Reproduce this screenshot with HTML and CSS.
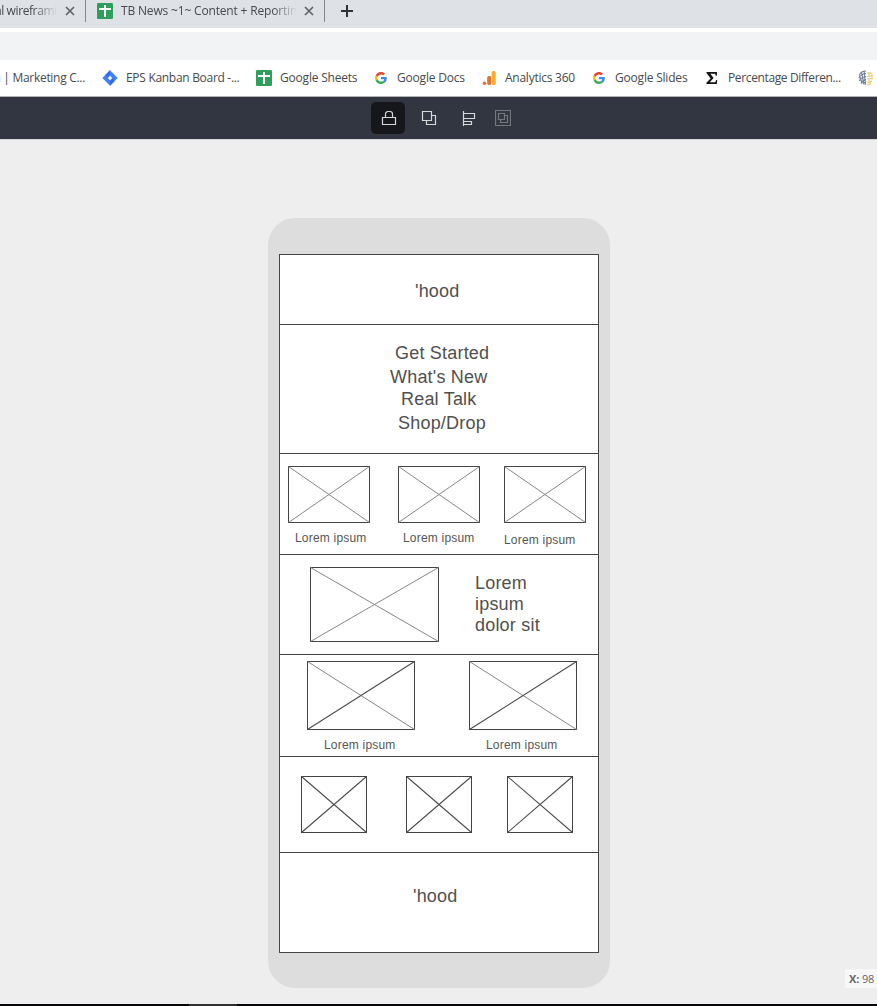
FILE: index.html
```
<!DOCTYPE html>
<html lang="en">
<head>
<meta charset="utf-8">
<title>Wireframe editor</title>
<link rel="stylesheet" href="styles.css">
</head>
<body>
<svg class="defs" width="0" height="0" aria-hidden="true">
  <symbol id="close" viewBox="0 0 10 10"><path d="M1 1l8 8M9 1L1 9" fill="none" stroke="#5f6368" stroke-width="1.7"/></symbol>
  <symbol id="sheets" viewBox="0 0 16 16"><rect width="16" height="16" rx="1.3" fill="#2e9e5b"/><path d="M7 2h2v3h5v2H9v7H7V7H2V5h5z" fill="#fff"/></symbol>
  <symbol id="google" viewBox="0 0 48 48"><path fill="#4285F4" d="M46.98 24.55c0-1.57-.15-3.09-.38-4.55H24v9.02h12.94c-.58 2.96-2.26 5.48-4.78 7.18l7.73 6c4.51-4.18 7.09-10.36 7.09-17.65z"/><path fill="#FBBC05" d="M10.53 28.59A14.5 14.5 0 0 1 9.77 24c0-1.6.27-3.14.76-4.59l-7.98-6.19A23.9 23.9 0 0 0 0 24c0 3.88.92 7.54 2.56 10.78z"/><path fill="#EA4335" d="M24 9.5c3.54 0 6.71 1.22 9.21 3.6l6.85-6.85C35.9 2.38 30.47 0 24 0 14.62 0 6.51 5.38 2.56 13.22l7.98 6.19C12.43 13.72 17.74 9.5 24 9.5z"/><path fill="#34A853" d="M24 48c6.48 0 11.93-2.13 15.89-5.81l-7.73-6c-2.15 1.45-4.92 2.3-8.16 2.3-6.26 0-11.57-4.22-13.47-9.91l-7.98 6.19C6.51 42.62 14.62 48 24 48z"/></symbol>
</svg>

<header class="browser">
  <div class="tabs">
    <div class="tab tab-first"><span class="tab-title">al wireframi</span><svg class="close"><use href="#close"/></svg></div>
    <div class="tab tab-news"><svg class="icon"><use href="#sheets"/></svg><span class="tab-title">TB News ~1~ Content + Reportin</span><svg class="close"><use href="#close"/></svg></div>
    <svg class="plus" viewBox="0 0 12 12"><path d="M6 0v12M0 6h12" stroke="#303236" stroke-width="2"/></svg>
  </div>
  <div class="address"></div>
  <nav class="bookmarks">
    <a class="mark mark-cut"><span><i class="violet">n</i> | Marketing C...</span></a>
    <a class="mark w-eps"><svg class="icon" viewBox="0 0 16 16"><path d="M8 .3L15.7 8 8 15.7.3 8z" fill="#3f80fb"/><path d="M8 .3v5L5.5 8 3.5 4.8zM8 15.7v-5L10.5 8l2 3.2z" fill="#2f6ee8"/><path d="M8 5.8L10.2 8 8 10.2 5.8 8z" fill="#fff"/></svg><span>EPS Kanban Board -...</span></a>
    <a class="mark w-sheets"><svg class="icon"><use href="#sheets"/></svg><span>Google Sheets</span></a>
    <a class="mark w-docs"><svg class="icon small"><use href="#google"/></svg><span>Google Docs</span></a>
    <a class="mark w-analytics"><svg class="icon" viewBox="0 0 16 16"><rect x="10.700" y="1" width="4" height="14" rx="1.6" fill="#f9ab2d"/><rect x="6.200" y="6" width="4" height="9" rx="1.6" fill="#e37430"/><circle cx="3.500" cy="13.3" r="1.8" fill="#e37430"/></svg><span>Analytics 360</span></a>
    <a class="mark w-slides"><svg class="icon small"><use href="#google"/></svg><span>Google Slides</span></a>
    <a class="mark w-percent"><svg class="icon" viewBox="0 0 16 16"><path d="M2.5 2h10.4v3.7h-1L11 3.8H6.4L9.6 8l-3.8 4.3h5.4l1-2.2h1L12.8 14H2.4v-1.2L6.6 8.4 2.5 3z" fill="#151515"/></svg><span>Percentage Differen...</span></a>
    <a class="mark"><svg class="icon globe" viewBox="0 0 16 16"><g fill="none" stroke-width="1.2"><path d="M8 1Q3 1 1.300 5M8 3.500Q3 4 .8 8M8 6.500Q4 7 1.200 11M8 9.500Q5 10 3 13.500M8 12.500H5M3.500 2.500l2.500 12M6.200 1.200l1.300 13.500M1.300 5.500l3 8" stroke="#71809b"/><path d="M9 3q3-1 5 1M9 6q3 1 6-1M9 9q3-1 6 0M9 12q3 1 5-1M9 15q2 0 4-2M11 3v3M14 5v4M11 9v3" stroke="#efce76"/></g></svg></a>
  </nav>
</header>

<div class="toolbar">
  <button class="tool active"><svg viewBox="0 0 16 16"><path d="M1.500 7.500h13v7h-13zM4.500 7.500V4a2.500 2.500 0 0 1 2.500-2.500h2a2.500 2.500 0 0 1 2.500 2.500v3.500"/></svg></button>
  <button class="tool"><svg viewBox="0 0 16 16"><path d="M1.500 1.500h9v9h-9zM11 5.500h3.500v9h-9V11"/></svg></button>
  <button class="tool"><svg viewBox="0 0 16 16"><path d="M2.500 1v15M3 3.500h10.500v5H3M3 11.500h7.500v3H3"/></svg></button>
  <button class="tool dim"><svg viewBox="0 0 16 16"><path d="M.5.5h15v15H.5zM3.500 3.500h6v6h-6zM10 5.500h2.500v7h-7V10"/></svg></button>
</div>

<main class="canvas">
  <div class="phone">
    <div class="screen">
      <section class="row brand"><p class="label">'hood</p></section>
      <section class="row menu">
        <p class="label get">Get Started</p><p class="label whats">What's New</p><p class="label talk">Real Talk</p><p class="label shop">Shop/Drop</p>
      </section>
      <section class="row thumbs">
        <figure><svg class="box" width="82" height="57"><rect x=".5" y=".5" width="81" height="56"/><path class="light" d="M.5.5l81 56M.5 56.500l81-56"/></svg><figcaption>Lorem ipsum</figcaption></figure>
        <figure><svg class="box" width="82" height="57"><rect x=".5" y=".5" width="81" height="56"/><path class="light" d="M.5.5l81 56M.5 56.500l81-56"/></svg><figcaption>Lorem ipsum</figcaption></figure>
        <figure><svg class="box" width="82" height="57"><rect x=".5" y=".5" width="81" height="56"/><path class="light" d="M.5.5l81 56M.5 56.500l81-56"/></svg><figcaption>Lorem ipsum</figcaption></figure>
      </section>
      <section class="row feature">
        <svg class="box" width="129" height="75"><rect x=".5" y=".5" width="128" height="74"/><path class="light" d="M.5.5l128 74M.5 74.500l128-74"/></svg>
        <p class="label">Lorem<br>ipsum<br>dolor sit</p>
      </section>
      <section class="row pair">
        <figure><svg class="box" width="108" height="69"><rect x=".5" y=".5" width="107" height="68"/><path class="light" d="M.5.5l107 68"/><path class="strong" d="M.5 68.500l107-68"/></svg><figcaption>Lorem ipsum</figcaption></figure>
        <figure><svg class="box" width="108" height="69"><rect x=".5" y=".5" width="107" height="68"/><path class="light" d="M.5.5l107 68"/><path class="strong" d="M.5 68.500l107-68"/></svg><figcaption>Lorem ipsum</figcaption></figure>
      </section>
      <section class="row tiles">
        <svg class="box" width="66" height="57"><rect x=".5" y=".5" width="65" height="56"/><path class="strong" d="M.5.5l65 56M.5 56.500l65-56"/></svg>
        <svg class="box" width="66" height="57"><rect x=".5" y=".5" width="65" height="56"/><path class="strong" d="M.5.5l65 56M.5 56.500l65-56"/></svg>
        <svg class="box" width="66" height="57"><rect x=".5" y=".5" width="65" height="56"/><path class="strong" d="M.5.5l65 56M.5 56.500l65-56"/></svg>
      </section>
      <section class="row footer"><p class="label">'hood</p></section>
    </div>
  </div>
  <div class="coords"><b>X:</b> 98</div>
</main>
<div class="taskbar"><div class="task"></div></div>
</body>
</html>
```
FILE: styles.css
```
* { box-sizing: border-box; }
body {
  margin: 0;
  height: 1006px;
  display: flex;
  flex-direction: column;
  overflow: hidden;
  background: #eee;
  font: 12px/16px "Open Sans", "Noto Sans", sans-serif;
  color: #46494d;
}
.defs { position: absolute; }
svg { display: block; flex: none; }
p, figure { margin: 0; }

/* Browser chrome */
.browser { height: 97px; background: #fff; border-bottom: 1px solid #b4b4b6; flex: none; }
.tabs { height: 28px; display: flex; background: #dee1e6; }
.tab { display: flex; align-items: center; height: 22px; border-right: 1px solid #85888c; white-space: nowrap; }
.tab-first { width: 86px; }
.tab-news { width: 239px; padding-left: 11px; }
.tab-title { letter-spacing: -.17px; -webkit-mask-image: linear-gradient(to right, #000 calc(100% - 24px), transparent); mask-image: linear-gradient(to right, #000 calc(100% - 24px), transparent); }
.tab-first .tab-title { width: 62px; margin-left: -5px; letter-spacing: -.4px; }
.tab-news .tab-title { width: 176px; margin-left: 8px; }
.close { width: 10px; height: 10px; }
.tab-first .close { margin-left: 8px; }
.tab-news .close { margin-left: 7px; }
.plus { width: 12px; height: 12px; margin: 5px 0 0 16px; }
.icon { width: 16px; height: 16px; }
.icon.small { padding: 2px; }
.address { height: 28px; margin-top: 4px; background: #f1f3f4; }
.bookmarks { display: flex; height: 36px; }
.mark { display: flex; align-items: center; gap: 8px; flex: none; white-space: nowrap; letter-spacing: -.2px; }
.mark-cut { width: 102px; padding-right: 17px; justify-content: flex-end; letter-spacing: -.3px; }
.violet { font-style: normal; color: #6554a8; }
.w-eps { width: 154px; letter-spacing: -.3px; }
.w-sheets { width: 117px; }
.w-docs { width: 108px; }
.w-analytics { width: 110px; letter-spacing: -.25px; }
.w-slides { width: 113px; }
.w-percent { width: 154px; letter-spacing: -.37px; }

/* Editor toolbar */
.toolbar { height: 42px; flex: none; display: flex; align-items: center; gap: 3px; padding-left: 371px; background: #323640; }
.tool { width: 34px; height: 32px; padding: 0; border: 0; border-radius: 5px; background: none; display: grid; place-items: center; }
.tool + .tool { width: 37px; padding-left: 5px; }
.tool svg { width: 16px; height: 16px; fill: none; stroke: #d6d7d9; stroke-width: 1.2; }
.tool.active { background: #15171a; padding-left: 2px; }
.tool + .tool.dim { width: 28px; padding-left: 2px; }
.tool.dim svg { stroke: #74777d; }

/* Canvas and device */
.canvas { position: relative; flex: 1; padding-top: 78px; border-top: 1px solid #d5d5d7; }
.phone { width: 342px; height: 770px; margin-left: 268px; padding: 36px 11px; border-radius: 27px; background: #ddd; }
.screen { width: 320px; height: 699px; border: 1px solid #444; background: #fff; }
.row { border-bottom: 1px solid #444; }
.row:last-child { border-bottom: 0; }
.label { font: 18px/21px "Liberation Sans", Arial, sans-serif; letter-spacing: .2px; color: #505050; white-space: nowrap; }
.brand { height: 70px; padding: 26px 0 0 135px; }
.menu { height: 129px; padding-top: 18px; }
.get { margin-left: 115px; }
.whats { margin: 3px 0 0 110px; }
.talk { margin: 1px 0 0 121px; }
.shop { margin: 3px 0 0 118px; }
.box { fill: none; stroke: #444; stroke-width: 1; }
.light { stroke: #858585; }
.strong { stroke: #4a4a4a; stroke-width: 1.05; }
figcaption { font: 12px/14px "Liberation Sans", Arial, sans-serif; letter-spacing: .2px; color: #555; white-space: nowrap; }
.thumbs { height: 101px; display: flex; padding: 12px 0 0 8px; }
.thumbs figcaption { margin: 8px 0 0 7px; }
.thumbs figure { width: 110px; }
.thumbs figure:nth-child(2) { width: 106px; }
.thumbs figure:nth-child(2) figcaption { margin-left: 5px; }
.thumbs figure:nth-child(3) { width: 82px; }
.thumbs figure:nth-child(3) figcaption { margin: 10px 0 0; }
.feature { height: 100px; display: flex; gap: 36px; padding: 12px 0 0 30px; }
.feature .label { padding-top: 6px; }
.pair { height: 102px; display: flex; gap: 54px; padding: 6px 0 0 27px; }
.pair figcaption { margin: 8px 0 0 17px; }
.tiles { height: 96px; display: flex; gap: 39px; padding: 19px 0 0 21px; }
.tiles .box:last-child { margin-left: -4px; }
.footer { padding: 33px 0 0 133px; }
.coords { position: absolute; right: 0; bottom: 16px; width: 32px; height: 19px; padding-left: 4px; background: #f7f7f7; color: #666; font-size: 11px; line-height: 20px; letter-spacing: -.15px; white-space: nowrap; }
.taskbar { height: 2px; flex: none; background: #050507; }
.task { width: 48px; height: 2px; margin-left: 189px; background: #303034; }
```
